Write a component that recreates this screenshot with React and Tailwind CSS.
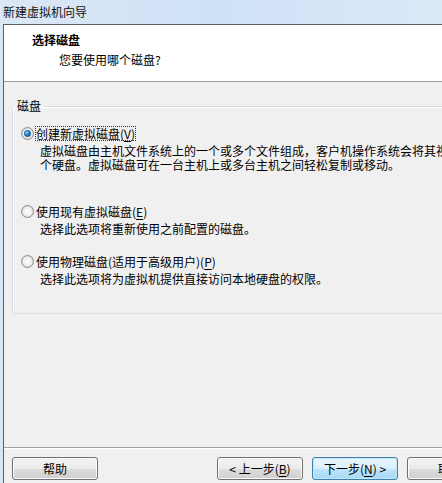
import React from "react";

const Radio = ({ checked }) => (
  <svg width="13" height="13" viewBox="0 0 13 13" className="shrink-0">
    <defs>
      <radialGradient id="rbg" cx="50%" cy="50%" r="60%">
        <stop offset="0%" stopColor="#ffffff" />
        <stop offset="60%" stopColor="#ececec" />
        <stop offset="100%" stopColor="#bcbcbc" />
      </radialGradient>
      <radialGradient id="rdot" cx="40%" cy="35%" r="70%">
        <stop offset="0%" stopColor="#8fd0ff" />
        <stop offset="45%" stopColor="#2f8ad8" />
        <stop offset="100%" stopColor="#0d4a86" />
      </radialGradient>
    </defs>
    <circle cx="6.5" cy="6.5" r="6" fill="url(#rbg)" stroke="#8e8f8f" strokeWidth="1" />
    {checked && <circle cx="6.5" cy="6.5" r="3.2" fill="url(#rdot)" stroke="#1a5a96" strokeWidth="0.6" />}
  </svg>
);

// mnemonic letter, underlined like a win32 accelerator
const Key = ({ k }) => <span className="underline underline-offset-2">{k}</span>;

const WinButton = ({ children, focused, className = "" }) => (
  <button
    className={
      "h-[23px] w-[86px] shrink-0 rounded-[3px] border text-[12px] leading-[21px] text-black " +
      (focused
        ? "border-[#3c7fb1] bg-[linear-gradient(#eaf6fd_0%,#d9f0fc_50%,#bee6fd_50%,#a7d9f5_100%)] shadow-[inset_0_0_0_1px_#c4e5f6] "
        : "border-[#707070] bg-[linear-gradient(#f2f2f2_0%,#ebebeb_50%,#dddddd_50%,#cfcfcf_100%)] shadow-[inset_0_0_0_1px_#fcfcfc] ") +
      className
    }
  >
    {children}
  </button>
);

const Option = ({ checked, focused, label, lines, gapTop }) => (
  <div className={gapTop}>
    <div className="flex items-center pl-[8px]">
      <Radio checked={checked} />
      <span
        className={
          "ml-[1px] border px-0 leading-[13px] " +
          (focused ? "border-dotted border-[#333]" : "border-transparent")
        }
      >
        {label}
      </span>
    </div>
    <div className="mt-[3px] pl-[27px] leading-[14px] whitespace-nowrap">
      {lines.map((l) => (
        <div key={l}>{l}</div>
      ))}
    </div>
  </div>
);

export default function App() {
  return (
    <div className="w-[442px] h-[483px] overflow-hidden bg-[#d7e6f7] font-['Noto_Sans_CJK_SC','Liberation_Sans',sans-serif] text-[12px] text-black">
      <div className="w-[540px] h-full flex flex-col">
        {/* title bar */}
        <div className="h-[24px] shrink-0 flex items-center pl-[3px] bg-[linear-gradient(90deg,#dbe7f5,#cfe1f7_40%,#d9e7f7_75%,#dde9f6)]">
          <span className="leading-[14px] text-[#111]">新建虚拟机向导</span>
        </div>

        <div className="flex-1 flex flex-col ml-[3px] border-l border-t border-[#596068] min-h-0">
          {/* header */}
          <div className="h-[57px] shrink-0 bg-white border-b border-[#a0a0a0] pl-[28px] pt-[7px]">
            <div className="font-bold leading-[16px]">选择磁盘</div>
            <div className="mt-[4px] pl-[27px] leading-[16px]">您要使用哪个磁盘?</div>
          </div>

          {/* body */}
          <div className="flex-1 flex flex-col bg-[#f0f0f0] min-h-0">
            <fieldset className="ml-[8px] mt-[17px] w-[500px] h-[215px] rounded-[3px] border border-[#d5dfe5] shadow-[inset_1px_1px_0_#ffffff]">
              <legend className="px-[4px] leading-[14px]">磁盘</legend>

              <Option
                gapTop="mt-[13px]"
                checked
                focused
                label={<>创建新虚拟磁盘(<Key k="V" />)</>}
                lines={[
                  "虚拟磁盘由主机文件系统上的一个或多个文件组成，客户机操作系统会将其视为一",
                  "个硬盘。虚拟磁盘可在一台主机上或多台主机之间轻松复制或移动。",
                ]}
              />
              <Option
                gapTop="mt-[32px]"
                label={<>使用现有虚拟磁盘(<Key k="E" />)</>}
                lines={["选择此选项将重新使用之前配置的磁盘。"]}
              />
              <Option
                gapTop="mt-[18px]"
                label={<>使用物理磁盘(适用于高级用户)(<Key k="P" />)</>}
                lines={["选择此选项将为虚拟机提供直接访问本地硬盘的权限。"]}
              />
            </fieldset>

            <div className="flex-1" />

            {/* footer */}
            <div className="border-t border-[#a0a0a0] shadow-[inset_0_1px_0_#ffffff] pt-[9px] pb-[3px] pl-[8px] flex">
              <WinButton>帮助</WinButton>
              <WinButton className="ml-[119px]">
                &lt; 上一步(<Key k="B" />)
              </WinButton>
              <WinButton focused className="ml-[9px]">
                下一步(<Key k="N" />) &gt;
              </WinButton>
              <WinButton className="ml-[9px]">取消</WinButton>
            </div>
          </div>
        </div>
      </div>
    </div>
  );
}
